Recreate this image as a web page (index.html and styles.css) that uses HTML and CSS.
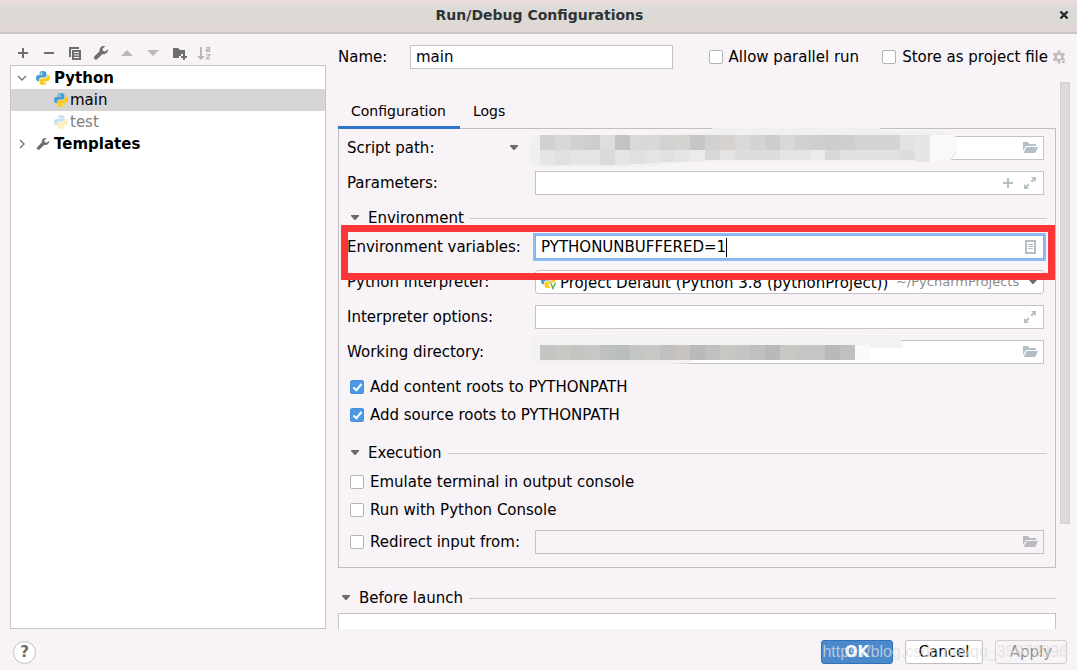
FILE: index.html
```html
<!DOCTYPE html>
<html lang="en">

<head>
    <meta charset="UTF-8">
    <meta name="viewport" content="width=device-width, initial-scale=1.0">
    <title>Run/Debug Configurations</title>
    <link rel="stylesheet" href="styles.css">
</head>

<body>
    <!-- shared icons -->
    <svg class="defs" width="0" height="0">
        <symbol id="python" viewBox="0 0 14 14">
            <path fill="#4a9fd0" d="M6.9 0C4 0 3.6 1.2 3.6 2.2v1.3h3.6V4H2.3C.8 4 0 5.2 0 7s.8 3.2 2 3.2h1.2V8.6c0-1.2 1-2 2.1-2h3.3c1 0 1.8-.8 1.8-1.8V2.2C10.4.8 9 0 6.9 0z" />
            <path fill="#ffcb13" transform="rotate(180 7 7)" d="M6.9 0C4 0 3.6 1.2 3.6 2.2v1.3h3.6V4H2.3C.8 4 0 5.2 0 7s.8 3.2 2 3.2h1.2V8.6c0-1.2 1-2 2.1-2h3.3c1 0 1.8-.8 1.8-1.8V2.2C10.4.8 9 0 6.9 0z" />
            <circle cx="5.3" cy="2" r=".7" fill="#fff" />
            <circle cx="8.7" cy="12" r=".7" fill="#fff" />
        </symbol>
        <symbol id="wrench" viewBox="0 0 16 16">
            <path fill="#6e6e6e" d="M15 4.2l-2.700 2.300-2.300-.5-.5-2.200 2.600-2.500C10.500.8 8.800 1.100 7.700 2.200 6.600 3.300 6.300 4.800 6.800 6.100L1.500 11.300c-.8.8-.8 2 0 2.800.8.8 2 .8 2.800 0l5.300-5.200c1.400.5 2.900.2 4-.9 1.100-1 1.700-2.400 1.400-3.800z" />
        </symbol>
        <symbol id="folder" viewBox="0 0 16 16">
            <path d="M1 2h5l1.500 2H14v2H4L1 11z" />
            <path d="M4.6 7H16l-2.800 6H1.600z" />
        </symbol>
        <symbol id="expand" viewBox="0 0 14 14">
            <path d="M8 1h5v5l-1.800-1.800L9 6.400 7.600 5l2.200-2.200zM6 13H1V8l1.800 1.800L5 7.600 6.400 9l-2.200 2.200z" />
        </symbol>
        <symbol id="down" viewBox="0 0 10 6">
            <path d="M1 0h8v1L5.500 5h-1L1 1z" />
        </symbol>
    </svg>

    <header class="titlebar">
        <h1>Run/Debug Configurations</h1>
        <button class="close" aria-label="Close">
            <svg width="10" height="10" viewBox="0 0 10 10"><path d="M1.500 1.500l7 7M8.500 1.500l-7 7" stroke="#222b2e" stroke-width="2.400" /></svg>
        </button>
    </header>

    <main class="main">
        <aside class="sidebar">
            <div class="toolbar">
                <button aria-label="Add"><svg viewBox="0 0 16 16"><path d="M7 3h2v4h4v2H9v4H7V9H3V7h4z" /></svg></button>
                <button aria-label="Remove"><svg viewBox="0 0 16 16"><path d="M3 7h10v2H3z" /></svg></button>
                <button aria-label="Copy"><svg viewBox="0 0 16 16"><path d="M2 2h10v2H4v8H2z" /><path fill-rule="evenodd" d="M5 5h9v10H5zM7 7v1h5V7zM7 9.500v1h5v-1zM7 12v1h5v-1z" /></svg></button>
                <button aria-label="Edit templates"><svg><use href="#wrench" /></svg></button>
                <button aria-label="Move up" disabled><svg viewBox="0 0 16 16"><path d="M2 11l6-6 6 6z" /></svg></button>
                <button aria-label="Move down" disabled><svg viewBox="0 0 16 16"><path d="M2 5h12l-6 6z" /></svg></button>
                <button aria-label="New folder"><svg viewBox="0 0 16 16"><path d="M2 3h5l2 2h5v4h-4v2H8v2H2z" /><path d="M12 9h2v2h2v2h-2v2h-2v-2h-2v-2h2z" /></svg></button>
                <button aria-label="Sort" disabled><svg viewBox="0 0 16 16"><path d="M3 2h2v9h3l-4 4-4-4h3z" /><path fill="none" stroke="#b9b9b9" stroke-width="1.300" d="M9.500 2.500h3v4.500M12.500 4.500h-3v2h3M9.500 9.700H13l-3.500 4H13" /></svg></button>
            </div>
            <ul class="tree">
                <li class="group">
                    <svg class="chevron" viewBox="0 0 10 10"><path d="M1 3l4 4 4-4" /></svg>
                    <svg class="icon"><use href="#python" /></svg>Python
                </li>
                <li class="child selected"><svg class="icon"><use href="#python" /></svg>main</li>
                <li class="child faded"><svg class="icon"><use href="#python" /></svg>test</li>
                <li class="group">
                    <svg class="chevron" viewBox="0 0 10 10"><path d="M3 1l4 4-4 4" /></svg>
                    <svg class="icon"><use href="#wrench" /></svg>Templates
                </li>
            </ul>
        </aside>

        <section class="settings">
            <div class="name-row">
                <label for="name">Name:</label>
                <input id="name" type="text" value="main">
                <label class="check"><input type="checkbox">Allow parallel run</label>
                <label class="check"><input type="checkbox">Store as project file</label>
                <button class="gear" aria-label="Storage options">
                    <svg width="16" height="16" viewBox="0 0 16 16">
                        <circle cx="7" cy="8" r="3.400" fill="none" stroke="#bdbcbd" stroke-width="2.400" />
                        <path stroke="#bdbcbd" stroke-width="2.600" d="M7 1.500v3M7 11.500v3M1.400 4.700L4 6.200M10 9.800l2.600 1.500M1.400 11.300L4 9.800M10 6.200l2.600-1.500" />
                        <path fill="#aaa" stroke="#f7f3f7" d="M8.500 11.500h6l-3 3.500z" />
                    </svg>
                </button>
            </div>

            <div class="scroll">
                <div class="content">
                    <nav class="tabs">
                        <button class="tab active">Configuration</button>
                        <button class="tab">Logs</button>
                    </nav>

                    <form class="panel">
                        <div class="row">
                            <div class="row-label">
                                <label for="script">Script path:</label>
                                <svg class="arrow"><use href="#down" /></svg>
                            </div>
                            <div class="field">
                                <input id="script" type="text">
                                <svg class="icon"><use href="#folder" /></svg>
                                <svg class="mosaic mosaic-script" width="430" height="42" viewBox="0 0 430 42">
                                    <path fill="#f1eff2" d="M4 8Q60 10 120 8L182 5V1H350V4H410Q426 8 427 20 427 32 418 34H170L110 40H5Q0 36 0 26 0 14 4 8z" />
                                    <path fill="#f9f9f9" d="M400 8h25q4 12-2 20l-4 6h-19z" />
                                    <g>
                                        <path fill="#d1d1d1" d="M10 8h15v15H10zM40 8h15v15H40zM175 8h15v15h-15zM265 8h15v15h-15z" />
                                        <path fill="#d8d8d8" d="M25 8h15v15H25zM115 8h15v15h-15zM250 8h15v15h-15z" />
                                        <path fill="#cfcccd" d="M55 8h15v15H55zM235 8h15v15h-15zM295 8h15v15h-15z" />
                                        <path fill="#dedede" d="M70 8h15v15H70z" />
                                        <path fill="#c3c3c3" d="M85 8h15v15H85z" />
                                        <path fill="#d7d9da" d="M100 8h15v15h-15zM205 8h15v15h-15z" />
                                        <path fill="#d3d1d1" d="M130 8h15v15h-15z" />
                                        <path fill="#d4d3d0" d="M145 8h15v15h-15z" />
                                        <path fill="#c4c6c8" d="M160 8h15v15h-15z" />
                                        <path fill="#d6d2d0" d="M190 8h15v15h-15z" />
                                        <path fill="#d3d5d4" d="M220 8h15v15h-15zM325 8h45v15h-45z" />
                                        <path fill="#cecfce" d="M280 8h15v15h-15zM310 8h15v15h-15z" />
                                        <path fill="#e2e2e2" d="M370 8h15v15h-15z" />
                                        <path fill="#e6e6e6" d="M385 8h15v27h-15z" />
                                    </g>
                                    <g>
                                        <path fill="#e4e5e7" d="M10 23h15v15H10zM85 23h15v15H85zM145 23h15v12h-15z" />
                                        <path fill="#e0dfe2" d="M25 23h15v15H25zM100 23h15v14h-15zM130 23h15v12h-15z" />
                                        <path fill="#e5e4e4" d="M40 23h30v15H40zM115 23h15v13h-15zM190 23h15v10h-15zM250 23h30v10h-30z" />
                                        <path fill="#dad9dc" d="M70 23h15v15H70z" />
                                        <path fill="#ebebed" d="M160 23h15v12h-15zM280 23h15v10h-15z" />
                                        <path fill="#d8d8d8" d="M175 23h15v10h-15zM295 23h15v10h-15z" />
                                        <path fill="#dcdddf" d="M205 23h15v10h-15zM235 23h15v10h-15zM370 23h15v10h-15z" />
                                        <path fill="#dedddb" d="M220 23h15v10h-15z" />
                                        <path fill="#e2e1e1" d="M310 23h60v10h-60z" />
                                    </g>
                                </svg>
                            </div>
                        </div>
                        <div class="row">
                            <div class="row-label"><label for="params">Parameters:</label></div>
                            <div class="field">
                                <input id="params" type="text">
                                <svg class="icon small" viewBox="0 0 14 14"><path d="M6 2h2v4h4v2H8v4H6V8H2V6h4z" /></svg>
                                <svg class="icon small"><use href="#expand" /></svg>
                            </div>
                        </div>

                        <h2 class="heading"><svg class="arrow"><use href="#down" /></svg>Environment</h2>

                        <div class="row marked">
                            <div class="row-label"><label for="env">Environment variables:</label></div>
                            <div class="field focused">
                                <input id="env" type="text" value="PYTHONUNBUFFERED=1">
                                <span class="caret"></span>
                                <svg class="icon small" viewBox="0 0 14 14"><path fill-rule="evenodd" d="M2 0h11v14H2zM4 2v10h7V2z" /><path d="M5 4h5v1H5zM5 6h5v1H5zM5 8h5v1H5z" /></svg>
                            </div>
                        </div>
                        <div class="row">
                            <div class="row-label"><label for="interpreter">Python interpreter:</label></div>
                            <div class="field combo">
                                <svg class="venv" viewBox="0 0 16 16">
                                    <use href="#python" width="14" height="14" />
                                    <path d="M9.500 8.500L12 14.500l2.500-6" fill="none" stroke="#fff" stroke-width="4" />
                                    <path d="M9.500 8.500L12 14.500l2.500-6" fill="none" stroke="#62b543" stroke-width="1.400" />
                                </svg>
                                <select id="interpreter">
                                    <option>Project Default (Python 3.8 (pythonProject))</option>
                                </select>
                                <span class="path">~/PycharmProjects</span>
                                <svg class="arrow"><use href="#down" /></svg>
                            </div>
                        </div>
                        <div class="row">
                            <div class="row-label"><label for="options">Interpreter options:</label></div>
                            <div class="field">
                                <input id="options" type="text">
                                <svg class="icon small"><use href="#expand" /></svg>
                            </div>
                        </div>
                        <div class="row">
                            <div class="row-label"><label for="workdir">Working directory:</label></div>
                            <div class="field">
                                <input id="workdir" type="text">
                                <svg class="icon"><use href="#folder" /></svg>
                                <svg class="mosaic mosaic-dir" width="375" height="36" viewBox="0 0 375 36">
                                    <path fill="#f3f1f4" d="M5 4Q120 0 355 3q16 0 18 10v3h-33v12H162v3L100 34H8Q0 30 0 18 0 8 5 4z" />
                                    <path fill="#f8fafc" d="M325 13h15v15h-15z" />
                                    <path fill="#c4c4c2" d="M10 13h15v15H10zM40 13h15v15H40zM205 13h15v15h-15z" />
                                    <path fill="#c9c7c4" d="M25 13h15v15H25zM55 13h15v15H55zM115 13h15v15h-15zM190 13h15v15h-15zM250 13h15v15h-15z" />
                                    <path fill="#bfc1c0" d="M70 13h15v15H70zM130 13h15v15h-15zM175 13h15v15h-15zM220 13h15v15h-15zM310 13h15v15h-15z" />
                                    <path fill="#babdbe" d="M85 13h15v15H85z" />
                                    <path fill="#c3c6c5" d="M100 13h15v15h-15zM265 13h30v15h-30z" />
                                    <path fill="#c6c3c1" d="M145 13h15v15h-15z" />
                                    <path fill="#b9b9b9" d="M160 13h15v15h-15zM235 13h15v15h-15zM295 13h15v15h-15z" />
                                </svg>
                            </div>
                        </div>
                        <div class="checks">
                            <label class="check"><input type="checkbox" checked>Add content roots to PYTHONPATH</label>
                            <label class="check"><input type="checkbox" checked>Add source roots to PYTHONPATH</label>
                        </div>

                        <h2 class="heading"><svg class="arrow"><use href="#down" /></svg>Execution</h2>

                        <label class="check"><input type="checkbox">Emulate terminal in output console</label>
                        <label class="check"><input type="checkbox">Run with Python Console</label>
                        <div class="row redirect">
                            <div class="row-label"><label class="check"><input type="checkbox">Redirect input from:</label></div>
                            <div class="field disabled">
                                <input type="text" aria-label="Input file" disabled>
                                <svg class="icon"><use href="#folder" /></svg>
                            </div>
                        </div>
                    </form>

                    <h2 class="heading before"><svg class="arrow"><use href="#down" /></svg>Before launch</h2>
                    <div class="tasks"></div>
                </div>
                <div class="scrollbar"></div>
            </div>
        </section>
    </main>

    <footer class="footer">
        <button class="help" aria-label="Help">?</button>
        <button class="btn primary">OK</button>
        <button class="btn cancel">Cancel</button>
        <button class="btn" disabled>Apply</button>
        <span class="watermark">https://blog.csdn.net/qq_35978996</span>
    </footer>
</body>

</html>
```
FILE: styles.css
```css
* {
    box-sizing: border-box;
}

body {
    margin: 0;
    height: 100vh;
    display: flex;
    flex-direction: column;
    overflow: hidden;
    background: #f7f3f7;
    color: #000;
    font: 15px/24px "DejaVu Sans", sans-serif;
}

button,
input,
select {
    font: inherit;
    color: inherit;
    margin: 0;
    padding: 0;
    border: none;
    background: none;
}

svg {
    display: block;
    flex: none;
}

.defs {
    position: absolute;
}

/* title bar */
.titlebar {
    height: 34px;
    flex: none;
    display: flex;
    align-items: center;
    padding: 0 8px 2px 20px;
    border-bottom: 2px solid #c9c5c5;
    background: linear-gradient(#e8dddc 0, #e8dddc 4px, #dcdcdc 6px, #dddad5 14px, #dddad5 24px, #e0d6d5 28px);
}

.titlebar h1 {
    flex: 1;
    margin: 0;
    text-align: center;
    font-size: 14px;
    color: #2e3436;
}

.close {
    width: 10px;
    height: 10px;
}

.main {
    flex: 1;
    min-height: 0;
    display: flex;
    gap: 12px;
    padding: 11px 0 0 10px;
}

/* left side */
.sidebar {
    width: 316px;
    flex: none;
    display: flex;
    flex-direction: column;
}

.toolbar {
    display: flex;
    gap: 10px;
    padding: 0 5px 4px;
}

.toolbar button,
.toolbar svg {
    width: 16px;
    height: 16px;
    fill: #6e6e6e;
}

.toolbar button:disabled svg {
    fill: #b9b9b9;
}

.tree {
    flex: 1;
    margin: 0;
    padding: 1px 0 0;
    list-style: none;
    background: #fff;
    border: 1px solid #c9c6c9;
}

.tree li {
    display: flex;
    align-items: center;
    height: 22px;
}

.tree .icon {
    width: 14px;
    height: 14px;
}

.tree .group {
    font-weight: bold;
    gap: 4px;
    padding-left: 6px;
}

.tree .child {
    gap: 2px;
    padding-left: 43px;
}

.tree .selected {
    background: #d5d5d5;
}

.tree .faded {
    color: #808080;
}

.tree .faded .icon {
    opacity: .3;
}

.chevron {
    width: 10px;
    height: 10px;
    margin-right: 5px;
    fill: none;
    stroke: #777;
    stroke-width: 1.4;
}

/* right side */
.settings {
    flex: 1;
    min-width: 0;
    display: flex;
    flex-direction: column;
}

.name-row {
    display: flex;
    align-items: center;
    padding-right: 9px;
}

.name-row>label:first-child {
    width: 72px;
}

#name {
    flex: 1;
    min-width: 0;
    height: 24px;
    padding: 0 5px;
    margin-right: 36px;
    background: #fff;
    border: 1px solid #c4c4c4;
}

.name-row .check+.check {
    margin-left: 23px;
}

.gear {
    margin-left: 4px;
}

.check {
    display: flex;
    align-items: center;
    gap: 6px;
    height: 24px;
}

.check input {
    appearance: none;
    width: 14px;
    height: 14px;
    display: flex;
    justify-content: center;
    align-items: flex-start;
    background: #fff;
    border: 1px solid #b4b4b4;
    border-radius: 2px;
}

.check input:checked {
    background: #4a98e6;
    border-color: #4590dc;
}

.check input:checked::after {
    content: "";
    box-sizing: border-box;
    width: 5px;
    height: 9px;
    margin-top: 1px;
    border: solid #fff;
    border-width: 0 2px 2px 0;
    transform: rotate(40deg);
}

.scroll {
    flex: 1;
    min-height: 0;
    display: flex;
    gap: 4px;
    padding-right: 7px;
    overflow: hidden;
}

.content {
    flex: 1;
    min-width: 0;
    padding-top: 28px;
}

.scrollbar {
    width: 10px;
    height: 79%;
    margin-top: 13px;
    background: #dcdadd;
    border: 1px solid #d0ced1;
}

.tabs {
    display: flex;
}

.tab {
    height: 32px;
    padding: 0 14px 1px 13px;
    font-size: 14px;
    border-bottom: 3px solid transparent;
}

.tab.active {
    position: relative;
    border-color: #2f74c8;
}

.panel {
    margin-top: -1px;
    padding: 7px 8px 13px;
    border: 1px solid #c0bec1;
}

.row {
    display: flex;
    margin-bottom: 11px;
    padding-right: 3px;
}

.row-label {
    width: 188px;
    flex: none;
    display: flex;
    align-items: center;
    justify-content: space-between;
    padding-right: 16px;
    white-space: nowrap;
}

.marked .row-label {
    padding-right: 0;
}

.field {
    position: relative;
    flex: 1;
    min-width: 0;
    height: 24px;
    display: flex;
    align-items: center;
    gap: 6px;
    padding: 0 5px;
    background: #fff;
    border: 1px solid #c4c2c5;
}

.field input {
    flex: 1;
    min-width: 0;
    height: 22px;
    outline: none;
}

.field .icon {
    width: 16px;
    height: 16px;
    fill: #b3bfc6;
}

.field .icon.small {
    width: 14px;
    height: 14px;
    margin: 0 1px;
}

.arrow {
    width: 10px;
    height: 6px;
    fill: #6a6a6a;
}

.focused {
    border-color: #7fb0e6;
    box-shadow: 0 0 0 2px #8ebdf3;
}

.caret {
    position: absolute;
    left: 190px;
    top: 2px;
    width: 1px;
    height: 19px;
    background: #000;
}

/* red frame round the variables row */
.marked {
    position: relative;
    z-index: 1;
}

.marked::after {
    content: "";
    position: absolute;
    top: -10px;
    right: -8px;
    bottom: -21px;
    left: -6px;
    border: 7px solid #fc3636;
    pointer-events: none;
}

.combo {
    gap: 3px;
    border-radius: 3px;
}

.combo select {
    appearance: none;
    height: 22px;
}

.combo .path {
    margin-left: 4px;
    font-size: 13px;
    color: #8c8c8c;
}

.combo .arrow {
    margin-left: auto;
}

.venv {
    width: 16px;
    height: 16px;
}

.disabled {
    background: transparent;
}

.disabled .icon {
    fill: #babac0;
}

/* pixelated paths */
.mosaic {
    position: absolute;
    left: -6px;
}

.mosaic-script {
    top: -10px;
}

.mosaic-dir {
    top: -9px;
}

.heading {
    display: flex;
    align-items: center;
    height: 24px;
    margin: 0 0 5px;
    padding-left: 3px;
    font-size: 15px;
    font-weight: normal;
}

.heading .arrow {
    margin-right: 8px;
}

.heading::after {
    content: "";
    flex: 1;
    margin-left: 6px;
    border-top: 1px solid #cbc9cc;
}

.panel .check {
    margin-bottom: 4px;
    padding-left: 3px;
}

.panel .checks {
    margin-bottom: 14px;
}

.panel .redirect {
    margin: 8px 0 0;
}

.panel .redirect .check {
    margin: 0;
}

.before {
    margin: 18px 0 3px;
}

.tasks {
    height: 80px;
    background: #fff;
    border: 1px solid #c4c2c5;
}

/* buttons */
.footer {
    position: relative;
    flex: none;
    display: flex;
    align-items: center;
    gap: 12px;
    height: 41px;
    padding: 5px 10px 0 13px;
}

.help {
    width: 23px;
    height: 23px;
    margin-right: auto;
    line-height: 20px;
    font-weight: bold;
    color: #6a6a6a;
    background: #fff;
    border: 1px solid #c0bec1;
    border-radius: 50%;
}

.btn {
    width: 72px;
    height: 24px;
    line-height: 20px;
    background: #fff;
    border: 1px solid #c0bec1;
    border-radius: 3px;
}

.btn.cancel {
    width: 78px;
}

.btn.primary {
    font-weight: bold;
    color: #fff;
    background: #4a89cc;
    border-color: #3270b8;
}

.btn:disabled {
    color: #8e8e8e;
    background: transparent;
    border-color: #cfcdd0;
}

.watermark {
    position: absolute;
    right: 9px;
    bottom: 6px;
    font: 16px/24px "Liberation Sans", sans-serif;
    color: rgba(222, 222, 222, .75);
    pointer-events: none;
}
```
